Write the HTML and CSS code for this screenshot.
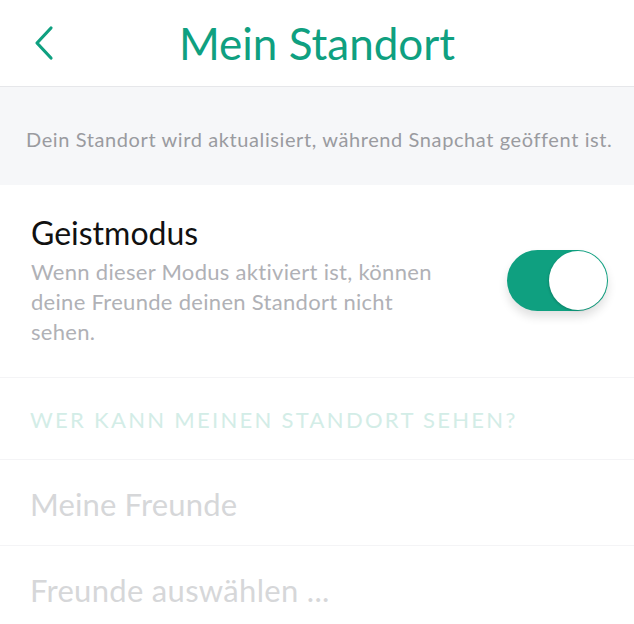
FILE: index.html
```html
<!DOCTYPE html>
<html lang="de">
<head>
<meta charset="utf-8">
<link rel="stylesheet" href="styles.css">
</head>
<body>
<div class="screen">
  <header class="header">
    <svg class="back" width="22" height="36" viewBox="0 0 22 36"><path d="M18 3 L4 18 L18 33" fill="none" stroke="#0fa080" stroke-width="3.2" stroke-linecap="round" stroke-linejoin="round"/></svg>
    <h1 class="title">Mein Standort</h1>
  </header>
  <div class="info">Dein Standort wird aktualisiert, während Snapchat geöffent ist.</div>
  <section class="ghost">
    <div class="ghost-text">
      <div class="ghost-title">Geistmodus</div>
      <div class="ghost-desc">Wenn dieser Modus aktiviert ist, können deine Freunde deinen Standort nicht sehen.</div>
    </div>
    <div class="toggle"><div class="knob"></div></div>
  </section>
  <div class="section-head">WER KANN MEINEN STANDORT SEHEN?</div>
  <div class="row row-a">Meine Freunde</div>
  <div class="row row-b">Freunde auswählen ...</div>
</div>
</body>
</html>
```
FILE: styles.css
```css
html, body { margin: 0; padding: 0; background: #fff; }
.screen { width: 634px; height: 624px; overflow: hidden; font-family: Lato, "Noto Sans", sans-serif; }
.header { height: 87px; box-sizing: border-box; border-bottom: 1px solid #e6e7ea; display: flex; align-items: center; justify-content: center; position: relative; }
.back { position: absolute; left: 33px; top: 25px; }
.title { margin: 0; font-size: 44px; font-weight: 400; color: #0fa080; }
.info { background: #f6f7f9; height: 98px; box-sizing: border-box; padding-top: 40px; padding-left: 26px; font-size: 20px; letter-spacing: 0.6px; color: #9a9ba0; white-space: nowrap; }
.ghost { display: flex; align-items: flex-start; padding: 28px 26px 0 31px; height: 193px; box-sizing: border-box; border-bottom: 1px solid #f4f4f6; }
.ghost-text { width: 412px; }
.ghost-title { font-size: 32px; color: #111; line-height: 40px; }
.ghost-desc { font-size: 22px; letter-spacing: 0.3px; color: #b0b1b6; line-height: 30px; margin-top: 4px; }
.toggle { margin-left: auto; margin-top: 37px; width: 101px; height: 61px; border-radius: 31px; background: #0fa080; position: relative; box-shadow: 0 6px 10px rgba(0,0,0,0.12); }
.knob { position: absolute; right: 1px; top: 1px; width: 58px; height: 59px; border-radius: 50%; background: #fff; box-shadow: -1px 1px 2px rgba(0,0,0,0.15); }
.section-head { height: 82px; box-sizing: border-box; padding: 28px 0 0 30px; font-size: 22px; letter-spacing: 2.3px; color: #d3ede7; border-bottom: 1px solid #f4f4f6; }
.row { height: 86px; box-sizing: border-box; padding: 25px 0 0 30px; font-size: 31px; color: #d6d7d9; border-bottom: 1px solid #f4f4f6; }
.row-a { letter-spacing: 0.15px; }
.row-b { letter-spacing: 0.3px; }
```
